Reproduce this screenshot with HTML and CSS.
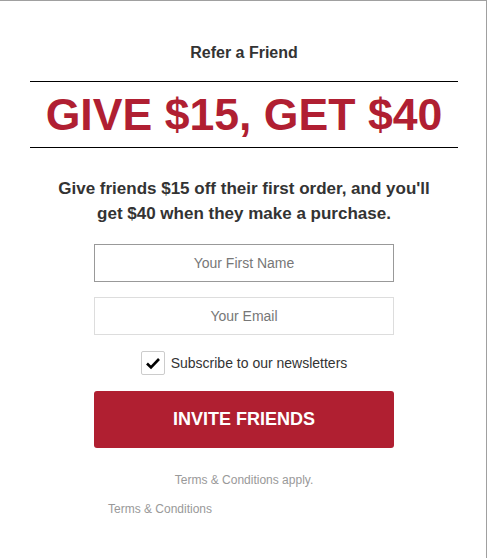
FILE: index.html
```html
<!DOCTYPE html>
<html>
<head>
    <title>Refer a Friend</title>
    <link rel="stylesheet" href="styles.css">
</head>
<body>
    <div class="modal">
        <h1 class="eyebrow">Refer a Friend</h1>
        <h2 class="offer">GIVE $15, GET $40</h2>
        <p class="lead">Give friends $15 off their first order, and you'll get $40 when they make a purchase.</p>

        <form class="refer-form" onsubmit="return false">
            <input type="text" class="field field-active" placeholder="Your First Name">
            <input type="email" class="field" placeholder="Your Email">
            <label class="subscribe">
                <span class="check">
                    <svg width="16" height="16" viewBox="0 0 16 16">
                        <path d="M2 8.5 L6 12.5 L14 4" fill="none" stroke="#000" stroke-width="2.6"/>
                    </svg>
                </span>
                Subscribe to our newsletters
            </label>
            <button type="submit" class="invite">Invite Friends</button>
        </form>

        <p class="terms-note">Terms &amp; Conditions apply.</p>
        <a class="terms-link">Terms &amp; Conditions</a>
    </div>
</body>
</html>
```

FILE: styles.css
```css
body {
    margin: 0;
    font-family: "Liberation Sans", Arial, sans-serif;
    background: #fff;
}
.modal {
    box-sizing: border-box;
    width: 487px;
    height: 558px;
    border-top: 1px solid #a0a0a0;
    border-right: 1px solid #a0a0a0;
    padding: 42px 28px 0 30px;
    text-align: center;
}
.eyebrow {
    margin: 0 0 18px;
    font-size: 16px;
    line-height: 20px;
    font-weight: bold;
    color: #333;
}
.offer {
    margin: 0;
    border-top: 1px solid #000;
    border-bottom: 1px solid #000;
    font-size: 44.6px;
    line-height: 65px;
    font-weight: bold;
    color: #b01f32;
}
.lead {
    max-width: 390px;
    margin: 28px auto 18px;
    font-size: 17px;
    line-height: 25px;
    font-weight: bold;
    color: #333;
}
.refer-form {
    display: flex;
    flex-direction: column;
    align-items: center;
}
.field {
    box-sizing: border-box;
    width: 300px;
    height: 38px;
    margin-bottom: 15px;
    border: 1px solid #ddd;
    font-family: inherit;
    font-size: 14px;
    text-align: center;
    color: #333;
}
.field::placeholder {
    color: #777;
}
.field-active {
    border-color: #999;
}
.subscribe {
    display: flex;
    align-items: center;
    gap: 6px;
    margin: 1px 0 16px;
    font-size: 14px;
    color: #333;
}
.check {
    box-sizing: border-box;
    display: flex;
    align-items: center;
    justify-content: center;
    width: 24px;
    height: 24px;
    border: 1px solid #ccc;
    border-radius: 2px;
}
.invite {
    width: 300px;
    height: 57px;
    border: none;
    border-radius: 3px;
    background: #b01f31;
    color: #fff;
    font-family: inherit;
    font-size: 18px;
    font-weight: bold;
    text-transform: uppercase;
    cursor: pointer;
}
.terms-note {
    margin: 24px 0 0;
    font-size: 12px;
    line-height: 16px;
    color: #999;
}
.terms-link {
    display: block;
    margin: 13px 0 0 78px;
    text-align: left;
    font-size: 12px;
    line-height: 16px;
    color: #999;
}
```
